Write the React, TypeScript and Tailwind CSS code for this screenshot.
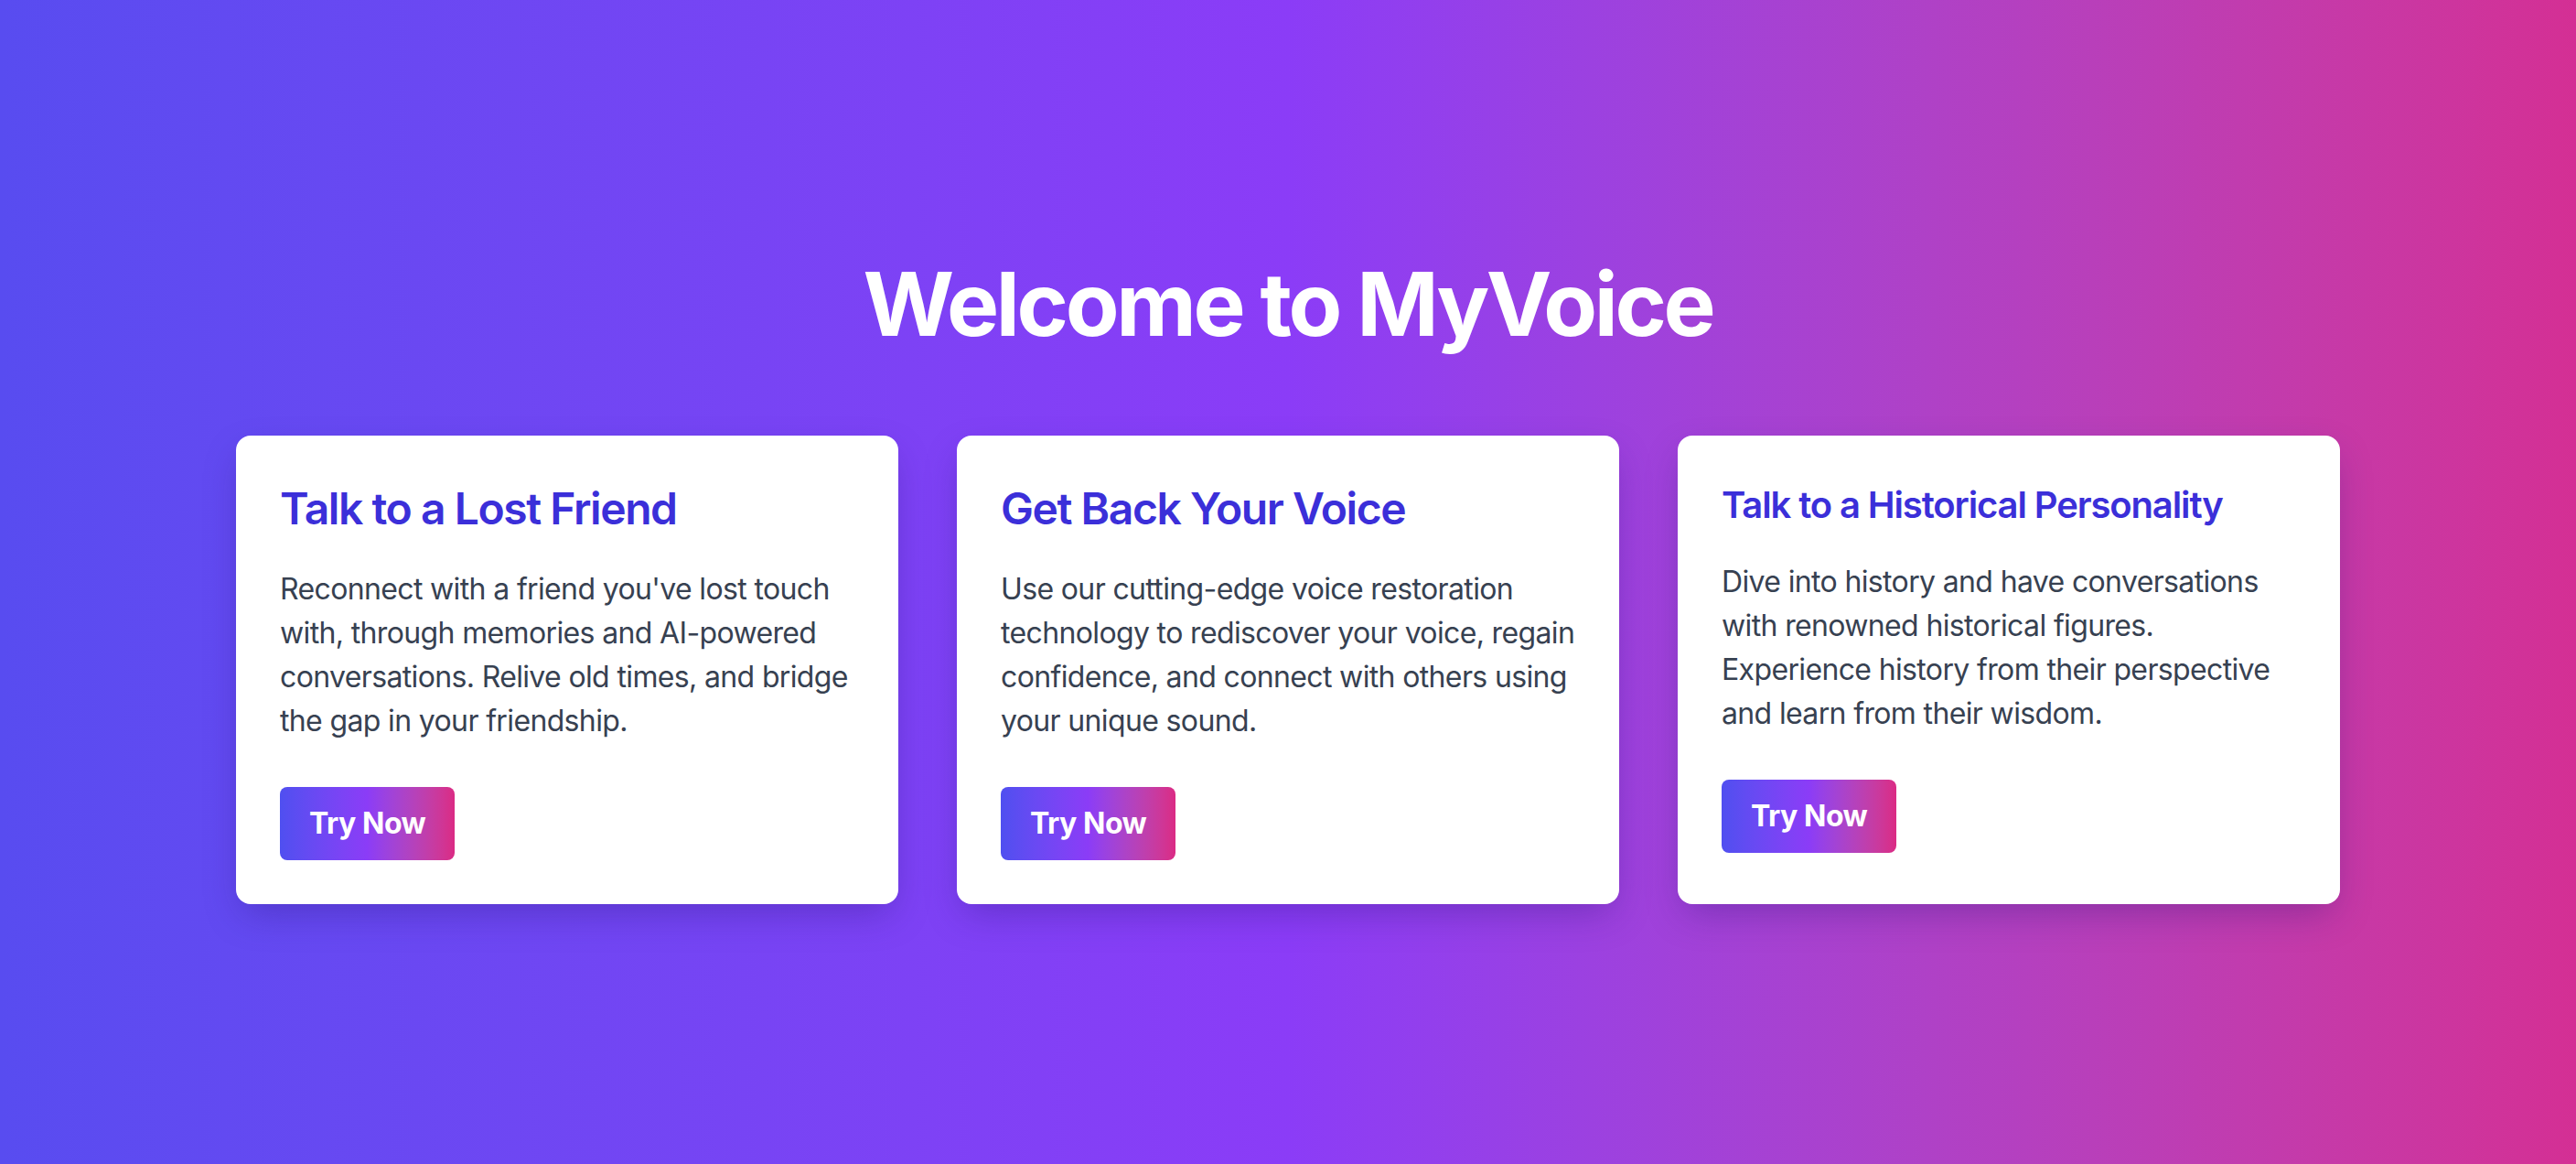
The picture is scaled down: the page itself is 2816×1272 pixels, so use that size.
import React from "react";

const features = [
  {
    title: "Talk to a Lost Friend",
    small: false,
    description:
      "Reconnect with a friend you've lost touch with, through memories and AI-powered conversations. Relive old times, and bridge the gap in your friendship.",
  },
  {
    title: "Get Back Your Voice",
    small: false,
    description:
      "Use our cutting-edge voice restoration technology to rediscover your voice, regain confidence, and connect with others using your unique sound.",
  },
  {
    title: "Talk to a Historical Personality",
    small: true,
    description:
      "Dive into history and have conversations with renowned historical figures. Experience history from their perspective and learn from their wisdom.",
  },
];

export default function App() {
  return (
    <main className="flex min-h-screen w-full items-center justify-center bg-gradient-to-r from-[#584cf0] via-[#8b3cf7] to-[#d42f94] font-['Inter','Liberation_Sans',sans-serif]">
      <div className="flex w-[2300px] flex-col items-center">
        <h1 className="mb-[96px] text-[96px] leading-[96px] font-bold tracking-[-0.035em] text-white">
          Welcome to MyVoice
        </h1>

        <section className="grid w-full grid-cols-3 gap-[64px]">
          {features.map((item, idx) => (
            <div
              key={idx}
              className="rounded-[16px] bg-white p-[48px] shadow-[0_16px_40px_-8px_rgba(40,20,120,0.35)]"
            >
              <h2
                className={
                  item.small
                    ? "mb-[32px] text-[40px] leading-[56px] font-semibold tracking-[-0.028em] text-[#3b2fd9]"
                    : "mb-[32px] text-[48px] leading-[64px] font-semibold tracking-[-0.03em] text-[#3b2fd9]"
                }
              >
                {item.title}
              </h2>
              <p className="mb-[48px] text-[32px] leading-[48px] tracking-[-0.02em] text-[#374151]">
                {item.description}
              </p>
              <button className="h-[80px] rounded-[8px] bg-gradient-to-r from-[#4f4ff0] via-[#8b3cf7] to-[#db2a84] px-[32px] text-[32px] font-bold tracking-[-0.015em] text-white">
                Try Now
              </button>
            </div>
          ))}
        </section>
      </div>
    </main>
  );
}
